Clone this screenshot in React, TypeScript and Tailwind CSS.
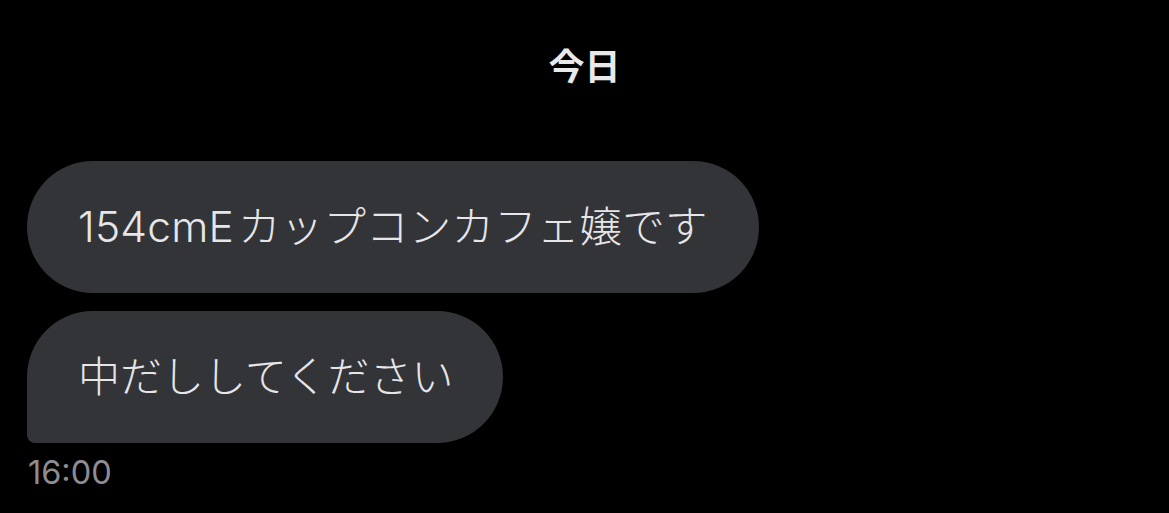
export default function App() {
  return (
    <div
      className="w-[1169px] h-[513px] bg-black overflow-hidden flex flex-col"
      style={{ fontFamily: 'Inter, "Noto Sans CJK JP", sans-serif' }}
    >
      {/* Date header */}
      <div className="pt-[49px] flex justify-center">
        <span className="text-[36px] leading-none font-semibold text-[#e9e9eb]">今日</span>
      </div>

      {/* Message group */}
      <div className="mt-[76px] pl-[27px] flex flex-col items-start gap-[18px]">
        <div className="h-[132px] flex items-center px-[51px] rounded-[66px] bg-[#333438]">
          <span className="text-[42.5px] leading-none font-light text-[#e6e6e8] tracking-[0.2px]">
            154cmE<span className="ml-[4px]">カップコンカフェ嬢です</span>
          </span>
        </div>
        <div className="h-[132px] flex items-center pl-[51px] pr-[50px] rounded-[66px] rounded-bl-[8px] bg-[#333438]">
          <span className="text-[42px] leading-none font-light text-[#e6e6e8]">中だししてください</span>
        </div>
      </div>

      <div className="pl-[28px] mt-[14px]">
        <span className="text-[32.5px] leading-none text-[#8d8d92]">16:00</span>
      </div>
    </div>
  );
}
